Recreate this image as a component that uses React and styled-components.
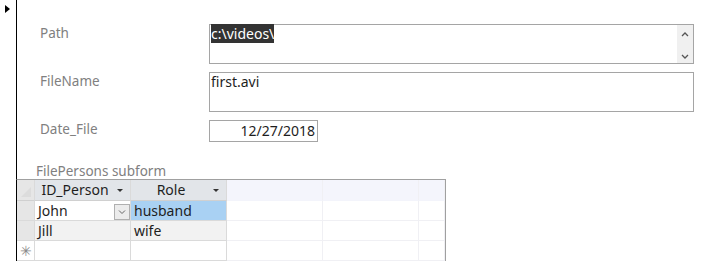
import React from "react";
import styled, { createGlobalStyle } from "styled-components";

const Global = createGlobalStyle`
  html, body { margin: 0; padding: 0; background: #fff; overflow: hidden; }
  body { font-family: "Noto Sans", "Open Sans", sans-serif; font-size: 13px; color: #1e1e1e; }
`;

const Page = styled.div`
  display: flex;
  width: 709px;
  height: 261px;
  overflow: hidden;
`;

const Selector = styled.div`
  width: 16px;
  flex: none;
  border-right: 1px solid #000;
`;

const Arrow = styled.div`
  margin: 5px 0 0 5px;
  width: 0;
  height: 0;
  border-top: 4px solid transparent;
  border-bottom: 4px solid transparent;
  border-left: 5px solid #000;
`;

const Body = styled.div`
  flex: 1;
  display: flex;
  flex-direction: column;
  padding-top: 24px;
`;

const Form = styled.div`
  display: flex;
  flex-direction: column;
  gap: 8px;
`;

const Row = styled.div`
  display: flex;
  align-items: flex-start;
`;

const Label = styled.div`
  width: 169px;
  padding-left: 23px;
  padding-top: ${(p) => p.$top || 0}px;
  color: #808080;
  font-size: 13.5px;
  line-height: 18px;
`;

const Field = styled.div`
  box-sizing: border-box;
  width: ${(p) => p.$w}px;
  height: ${(p) => p.$h}px;
  border: 1px solid #a5a5a5;
  background: #fff;
  display: flex;
  line-height: 17px;
  font-size: 14px;
  justify-content: ${(p) => (p.$right ? "flex-end" : "flex-start")};
  padding: ${(p) => (p.$right ? "1px 2px 0 0" : "0")};
`;

const FieldText = styled.div`
  flex: 1;
  padding-left: 1px;
  white-space: nowrap;
`;

const Selected = styled.span`
  background: #333;
  color: #fff;
`;

const Scroll = styled.div`
  width: 16px;
  background: #f0f0f0;
  display: flex;
  flex-direction: column;
  justify-content: space-between;
  align-items: center;
  padding: 6px 0 3px;
`;

const SubLabel = styled.div`
  margin-top: 21px;
  padding-left: 19px;
  height: 17px;
  line-height: 17px;
  color: #808080;
  font-size: 13.5px;
  overflow: hidden;
`;

const Grid = styled.div`
  margin-left: -1px;
  width: 428px;
  display: grid;
  grid-template-columns: 18px 96px 96px 96px 96px 26px;
  grid-auto-rows: 20px;
  grid-template-rows: 21px;
  border-top: 1px solid #a0a0a0;
  border-right: 1px solid #a0a0a0;
  border-left: 1px solid #000;
`;

const Cell = styled.div`
  position: relative;
  box-sizing: border-box;
  border-right: 1px solid ${(p) => (p.$faint ? "#f0f0f4" : "#dadada")};
  border-bottom: 1px solid ${(p) => (p.$faint ? "#f0f0f4" : "#dadada")};
  background: ${(p) => p.$bg || "#fff"};
  padding-left: 3px;
  line-height: 19px;
  font-size: 14px;
  white-space: nowrap;
  overflow: hidden;
`;

const Head = styled(Cell)`
  text-align: center;
  padding-left: 0;
  padding-right: ${(p) => (p.$caret ? 15 : 0)}px;
  line-height: 20px;
  border-bottom-color: ${(p) => (p.$faint ? "#f3f4fb" : "#d0d0d0")};
`;

const Caret = styled.span`
  position: absolute;
  right: 7px;
  top: 9px;
  width: 0;
  height: 0;
  border-left: 3px solid transparent;
  border-right: 3px solid transparent;
  border-top: 3px solid #333;
`;

const ComboBtn = styled.div`
  position: absolute;
  right: 0;
  top: 3px;
  width: 16px;
  height: 16px;
  box-sizing: border-box;
  border: 1px solid #b0b0b0;
  background: #ececec;
  display: flex;
  align-items: center;
  justify-content: center;
`;

const Star = styled.div`
  color: #8a8a8a;
  font-size: 14px;
  text-align: center;
  line-height: 19px;
`;

const Chevron = ({ up }) => (
  <svg width="8" height="6" viewBox="0 0 8 6">
    <path d={up ? "M1 5 L4 2 L7 5" : "M1 1 L4 4 L7 1"} fill="none" stroke="#555" strokeWidth="1.3" />
  </svg>
);

const rows = [
  { id: "John", role: "husband", bg: "#fff", combo: true, sel: true },
  { id: "Jill", role: "wife", bg: "#f2f2f2" },
];

export default function App() {
  return (
    <>
      <Global />
      <Page>
        <Selector>
          <Arrow />
        </Selector>
        <Body>
          <Form>
            <Row>
              <Label>Path</Label>
              <Field $w={485} $h={40}>
                <FieldText>
                  <Selected>c:\videos\</Selected>
                </FieldText>
                <Scroll>
                  <Chevron up />
                  <Chevron />
                </Scroll>
              </Field>
            </Row>
            <Row>
              <Label>FileName</Label>
              <Field $w={485} $h={40}>
                <FieldText>first.avi</FieldText>
              </Field>
            </Row>
            <Row>
              <Label>Date_File</Label>
              <Field $w={109} $h={22} $right>
                12/27/2018
              </Field>
            </Row>
          </Form>
          <SubLabel>FilePersons subform</SubLabel>
          <Grid>
            <Head $bg="#e6e6e6">
              <svg width="17" height="20" style={{ position: "absolute", left: 0, top: 0 }}>
                <path d="M4 17 L14 7 L14 17 Z" fill="#dcdcdc" />
              </svg>
            </Head>
            <Head $bg="#e2e5e9" $caret>
              ID_Person<Caret />
            </Head>
            <Head $bg="#e2e5e9" $caret>
              Role<Caret />
            </Head>
            <Head $bg="#f4f5fc" $faint />
            <Head $bg="#f4f5fc" $faint />
            <Head $bg="#f4f5fc" $faint />
            {rows.map((r) => (
              <React.Fragment key={r.id}>
                <Cell $bg="#e6e6e6" />
                <Cell $bg={r.bg}>
                  {r.id}
                  {r.combo && (
                    <ComboBtn>
                      <svg width="8" height="6" viewBox="0 0 8 6">
                        <path d="M1 1.5 L4 4.5 L7 1.5" fill="none" stroke="#666" strokeWidth="1" />
                      </svg>
                    </ComboBtn>
                  )}
                </Cell>
                <Cell $bg={r.sel ? "#a9d1f3" : r.bg}>{r.role}</Cell>
                <Cell $faint />
                <Cell $faint />
                <Cell $faint />
              </React.Fragment>
            ))}
            <Cell $bg="#fff" style={{ padding: 0 }}>
              <Star>✳</Star>
            </Cell>
            <Cell />
            <Cell />
            <Cell $faint />
            <Cell $faint />
            <Cell $faint />
          </Grid>
        </Body>
      </Page>
    </>
  );
}
